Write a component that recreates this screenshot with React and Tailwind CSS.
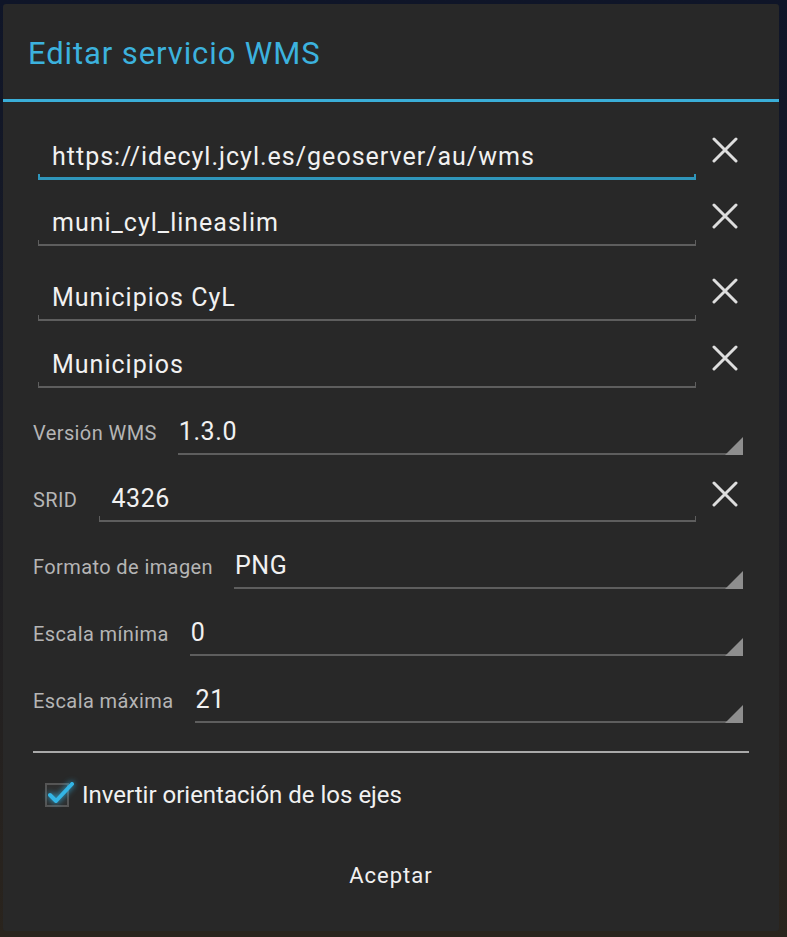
import React from 'react';

const font = { fontFamily: 'Roboto, "Noto Sans", sans-serif' };

const ClearIcon = () => (
  <svg width="26" height="26" viewBox="0 0 26 26" className="shrink-0">
    <path d="M2 2 L24 24 M24 2 L2 24" stroke="#dedede" strokeWidth="3" strokeLinecap="round" />
  </svg>
);

const Underline = ({ focused }) =>
  focused ? (
    <div className="h-[6px] border-l-2 border-r-2 border-b-[3px] border-[#2f96bb]" />
  ) : (
    <div className="h-[6px] border-l border-r border-b-2 border-[#5e5e5e]" />
  );

const EditField = ({ value, focused }) => (
  <div className="flex-1 pt-[5px]">
    <div className="h-[32px] pl-[14px] text-[25px] leading-[30px] tracking-[1px] text-[#f1f1f1] whitespace-nowrap">{value}</div>
    <Underline focused={focused} />
  </div>
);

const InputRow = ({ value, focused, className }) => (
  <div className={'flex items-start pl-[35px] pr-[41px] gap-[16px] ' + className}>
    <EditField value={value} focused={focused} />
    <ClearIcon />
  </div>
);

const Spinner = ({ value }) => (
  <div className="relative flex-1 h-[38px] border-b-2 border-[#5e5e5e]">
    <div className="pl-[1px] text-[25px] leading-[30px] tracking-[0.6px] text-[#f1f1f1]">{value}</div>
    <svg width="18" height="18" viewBox="0 0 18 18" className="absolute right-0 -bottom-[2px]">
      <path d="M0 18 L18 18 L18 0 Z" fill="#8e8e8e" />
    </svg>
  </div>
);

const Label = ({ children }) => (
  <span className="mb-[7px] text-[20px] leading-[30px] tracking-[0.4px] text-[#b5b5b5] whitespace-nowrap">{children}</span>
);

const SpinnerRow = ({ label, value }) => (
  <div className="flex items-end h-[67px] pl-[30px] pr-[36px] gap-[21px]">
    <Label>{label}</Label>
    <Spinner value={value} />
  </div>
);

export default function App() {
  return (
    <div className="w-[787px] h-[937px] overflow-hidden bg-gradient-to-b from-[#0f1528] to-[#2a241d]" style={font}>
      <div className="ml-[3px] mt-[4px] w-[776px] h-[927px] bg-[#282828] rounded-[3px] flex flex-col">
        <div className="h-[95px] pt-[35px] pl-[25px] text-[31px] leading-[30px] tracking-[0.9px] text-[#3cb2de]">
          Editar servicio WMS
        </div>
        <div className="h-[3px] bg-[#3aaed8]" />

        <InputRow className="mt-[35px]" value="https://idecyl.jcyl.es/geoserver/au/wms" focused />
        <InputRow className="mt-[23px]" value="muni_cyl_lineaslim" />
        <InputRow className="mt-[32px]" value="Municipios CyL" />
        <InputRow className="mt-[24px]" value="Municipios" />

        <SpinnerRow label="Versión WMS" value="1.3.0" />

        <div className="flex items-end h-[67px] pl-[30px] pr-[41px]">
          <Label>SRID</Label>
          <div className="flex-1 ml-[22px]">
            <div className="h-[32px] pl-[12px] text-[25px] leading-[30px] tracking-[0.6px] text-[#f1f1f1]">4326</div>
            <Underline />
          </div>
          <div className="ml-[16px] mb-[15px]">
            <ClearIcon />
          </div>
        </div>

        <SpinnerRow label="Formato de imagen" value="PNG" />
        <SpinnerRow label="Escala mínima" value="0" />
        <SpinnerRow label="Escala máxima" value="21" />

        <div className="mt-[28px] mx-[30px] h-[2px] bg-[#a9a9a9]" />

        <div className="mt-[27px] ml-[42px] flex items-center h-[30px]">
          <div className="relative w-[24px] h-[24px] border-2 border-[#555555] bg-[#2e2e2e]">
            <svg width="30" height="30" viewBox="0 0 30 30" className="absolute -left-[2px] -top-[7px] drop-shadow-[0_0_3px_#33b5e5]">
              <path d="M5 17 L11 23 L27 6" stroke="#33b5e5" strokeWidth="4" fill="none" strokeLinecap="round" strokeLinejoin="round" />
            </svg>
          </div>
          <span className="ml-[13px] text-[24px] leading-[30px] text-[#f1f1f1]">Invertir orientación de los ejes</span>
        </div>

        <div className="mt-[51px] text-center text-[22px] leading-[30px] tracking-[1px] text-[#f1f1f1]">Aceptar</div>
      </div>
    </div>
  );
}
